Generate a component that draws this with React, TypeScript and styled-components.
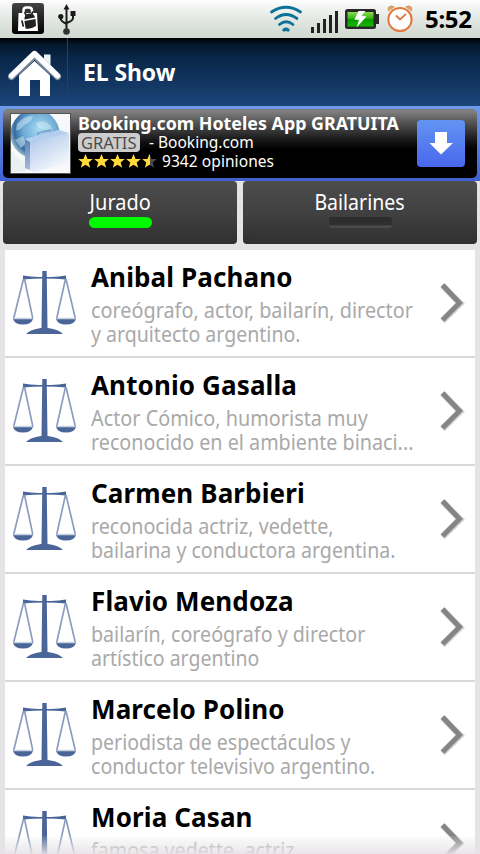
import React from "react";
import styled, { createGlobalStyle } from "styled-components";

const Global = createGlobalStyle`
  *{box-sizing:border-box}
  body{margin:0;background:#e6e3e6;overflow:hidden;font-family:"Noto Sans","Open Sans",sans-serif}
`;
const Screen = styled.div`
  position:relative;width:480px;height:854px;overflow:hidden;background:#e6e3e6;display:flex;flex-direction:column;
`;
const Line = styled.span<{ $sx?: number; $center?: boolean }>`
  display:block;white-space:pre;
  transform:scaleX(${p => p.$sx ?? 1});transform-origin:${p => (p.$center ? "center" : "left")};
`;
const StatusBar = styled.header`
  flex:none;height:38px;padding:0 9px 0 12px;display:flex;justify-content:space-between;align-items:center;
  background:linear-gradient(#fff 0,#f4f6f4 15%,#dfe4df 60%,#cfd8d1 100%);
`;
const StatusIcons = styled.div<{ $gap: number }>`display:flex;align-items:center;height:38px;gap:${p => p.$gap}px;`;
const Clock = styled.span`
  width:46px;font-size:24px;line-height:38px;font-weight:700;color:#000;white-space:nowrap;letter-spacing:-0.3px;
`;
const TitleBar = styled.div`
  flex:none;height:68px;display:flex;align-items:center;
  background:linear-gradient(#000 0,#04182f 10%,#092748 30%,#1b457a 100%);
`;
const HomeCell = styled.div`width:68px;height:68px;border-right:1px solid #0a5c1c;padding:10px 0 0 8px;`;
const Title = styled.h1`margin:0 0 0 15px;font-size:23px;line-height:68px;font-weight:700;color:#fff;letter-spacing:-0.1px;`;
const Ad = styled.section`
  flex:none;height:75px;padding:3px;background:linear-gradient(#6f9bea,#4160d2);
`;
const AdInner = styled.div`
  height:69px;border-radius:5px;border-top:1px solid #777;display:flex;padding:3px 10px 0 7px;
  background:linear-gradient(#858585 0,#555 18%,#151515 45%,#000 58%);
`;
const AdThumb = styled.div`width:61px;height:61px;border:1.5px solid #555;background:#f6f8f9;overflow:hidden;`;
const AdText = styled.div`flex:1;margin-left:7px;margin-top:1px;color:#fff;`;
const AdTitle = styled.div`font-size:18px;line-height:19px;height:19px;font-weight:700;`;
const AdRow = styled.div`display:flex;align-items:center;height:19px;font-size:15.5px;line-height:19px;`;
const FreeTag = styled.span`
  width:62px;height:19px;padding-left:3px;margin-right:9px;border-radius:4px;background:#ccc;color:#4c4c4c;font-size:16.5px;
`;
const Opinions = styled.div`margin-left:3px;letter-spacing:0.07px;`;
const Download = styled.button`
  flex:none;width:48px;height:47px;margin:7px 2px 0 0;padding:0;border:0;border-radius:4px;background:linear-gradient(#6394f3,#4967ec);
`;
const Tabs = styled.nav`
  flex:none;height:63px;display:grid;grid-template-columns:234px 234px;gap:6px;padding:0 3px;
`;
const Tab = styled.div`
  height:63px;border-radius:4px;background:linear-gradient(#4d4d4d,#3f3f3f 55%,#303030);
  display:flex;flex-direction:column;align-items:center;color:#fff;font-size:21px;line-height:28px;padding-top:7px;
`;
const Indicator = styled.i<{ $on?: boolean }>`
  width:63px;height:11px;margin-top:1px;border-radius:${p => (p.$on ? 5.5 : 3)}px;
  background:${p => (p.$on ? "#00fb00" : "linear-gradient(#2b2b2b 0,#303030 70%,#4e4e4e 85%,#484848 100%)")};
`;
const List = styled.ul`
  list-style:none;margin:6px 5px 0;padding:0;flex:1;min-height:0;overflow:hidden;
`;
const Row = styled.li`
  height:108px;border-bottom:2px solid #dcd9dc;background:#fff;display:flex;
`;
const RowIcon = styled.div`width:64px;margin:20px 0 0 7px;flex:none;`;
const RowText = styled.div`width:348px;margin-left:15px;padding-top:9px;`;
const Name = styled.div`font-size:26px;line-height:36px;font-weight:700;color:#000;letter-spacing:0.12px;`;
const Desc = styled.div`margin-top:3px;font-size:21px;line-height:24px;color:#a9a9a9;`;
const Arrow = styled.div`margin-top:32px;`;
const Fade = styled.div`
  position:absolute;left:0;right:0;bottom:0;height:18px;background:linear-gradient(rgba(230,227,230,0.1),rgba(230,227,230,0.9));
`;

const MarketIcon = () => (
  <svg width="32" height="32" viewBox="0 0 32 32">
    <defs><linearGradient id="mk" x2="0" y2="1"><stop stopColor="#444" /><stop offset=".5" stopColor="#222" /><stop offset="1" stopColor="#000" /></linearGradient></defs>
    <rect width="32" height="31" rx="3" fill="url(#mk)" />
    <path d="M11.500 11V7.500q0-3 3-3h2.500q3 0 3 3V11" fill="none" stroke="#fff" strokeWidth="2.400" />
    <path d="M6.500 10h18.500l1 18H6z" fill="#fff" />
    <path d="M12.500 16.500q-.5-5 4.500-6 5-.5 6 4z" fill="#222" />
    <path d="M12.500 18l11-2 .5 7q-5 3.500-10.500 2.500z" fill="#222" />
    <path d="M10 18l1.200 5M13 10l1.500 3M20.500 9l-1 3" stroke="#222" strokeWidth="1.700" strokeLinecap="round" />
  </svg>
);
const UsbIcon = () => (
  <svg width="20" height="32" viewBox="0 0 20 32">
    <g fill="none" stroke="#1c1c1c" strokeWidth="2"><path d="M8.500 5v23M2.800 13v3q0 2 5.700 5M15 10v5q0 3-6.500 5" /></g>
    <path d="M8.500 1l3 5.500h-6z" fill="#1c1c1c" /><circle cx="2.800" cy="13.500" r="2.600" fill="#1c1c1c" /><path d="M12.500 8h5v5h-5z" fill="#1c1c1c" /><circle cx="8.500" cy="28.500" r="3.300" fill="#333" />
  </svg>
);
const StatusRight = () => (
  <svg width="146" height="38" viewBox="268 0 146 38">
    <defs><linearGradient id="bt" x2="0" y2="1"><stop stopColor="#8ddc54" /><stop offset=".45" stopColor="#35b40e" /><stop offset=".5" stopColor="#079b00" /><stop offset="1" stopColor="#18b804" /></linearGradient></defs>
    <g fill="none" stroke="#0b7299" strokeWidth="2.800" strokeLinecap="round">
      <path d="M271.500 12q14.500-9.500 29 0M275.500 18.500q10.500-8 21.500 0M279.500 24.500q6.500-5.500 13.500 0" /><path d="M284 30q2-1.500 4 0" strokeWidth="3.400" />
    </g>
    <g fill="#222"><path d="M311 27h3v6h-3zM317 23h3v10h-3zM323 19h3v14h-3zM329 15h3v18h-3zM335 11h3v22h-3z" /></g>
    <rect x="345" y="9" width="31" height="20" rx="2.500" fill="#282828" /><path d="M376 14h3v10h-3z" fill="#282828" /><rect x="347.500" y="12" width="26" height="14.500" fill="url(#bt)" />
    <path d="M358.500 11l-4 8.500 4.500.5-2.500 7.500 10-11-5-1 4-4.500z" fill="#fff" />
    <path d="M388 11.500q-1.500-5.500 3.500-6 2 0 3.500 1.500zM412 11.500q1.500-5.500-3.500-6-2 0-3.500 1.500z" fill="#dba06a" />
    <circle cx="400" cy="19.500" r="11.600" fill="#fff" stroke="#e2783e" strokeWidth="2" /><path d="M396 15.500l4 4 6-5.500" fill="none" stroke="#d97848" strokeWidth="1.800" />
  </svg>
);
const HomeIcon = () => (
  <svg width="54" height="50" viewBox="8 48 54 50">
    <path d="M44 60v-5.500h6.500v11z" fill="#edf2f8" />
    <path d="M11.500 76.500L34.500 54.500 57.500 76.500" fill="none" stroke="#7d8fa7" strokeWidth="7" strokeLinecap="round" strokeLinejoin="round" />
    <path d="M19 75.500L34.500 61 50 75.500V96H40V80H30v16H19z" fill="#fff" />
    <path d="M11.500 75.800L34.500 53.500 57.500 75.800" fill="none" stroke="#fff" strokeWidth="5.400" strokeLinecap="round" strokeLinejoin="round" />
    <path d="M19 74.500L34.500 59.500 50 74.500" fill="none" stroke="#8494a8" strokeWidth="1" />
  </svg>
);
const ThumbArt = () => (
  <svg width="58" height="58" viewBox="0 0 58 58">
    <defs>
      <radialGradient id="gl" cx=".6" cy=".4" r=".62"><stop stopColor="#a9dcf3" /><stop offset=".55" stopColor="#6fabd6" /><stop offset=".85" stopColor="#356c9f" /><stop offset="1" stopColor="#8fb0c8" /></radialGradient>
      <linearGradient id="cs" x2=".6" y2="1"><stop stopColor="#8fafdc" /><stop offset=".35" stopColor="#bdd1ee" /><stop offset="1" stopColor="#f3f7fc" /></linearGradient>
      <linearGradient id="sd" x2="0" y2="1"><stop stopColor="#5f80b2" /><stop offset="1" stopColor="#a5bddc" /></linearGradient>
    </defs>
    <circle cx="24" cy="20" r="24.500" fill="url(#gl)" />
    <path d="M6 10q8-9 16-8-1 6-9 9-4 6-8 5zM25 9q9-4 15 3l1 5-14-3zM4 26l8-4 3 7-5 5z" fill="#d3edf7" opacity=".5" />
    <path d="M0 36q6 10 15 12v10H0z" fill="#e9f0f4" />
    <path d="M14 25l34-9 10 4v29l-34 9-9-3z" fill="url(#cs)" /><path d="M14 25l5 3v28l-5-2z" fill="url(#sd)" /><path d="M14 25l34-9 10 3-39 9z" fill="#b4cef0" /><path d="M27 21v-2l12-3v2" fill="none" stroke="#7e9fc8" strokeWidth="1.600" />
  </svg>
);
const STAR = "M0-7.600L2.100-2.500H7.300L3.200.9 4.700 6.300 0 3.300-4.700 6.300-3.200.9-7.300-2.500H-2.100z";
const Stars = () => (
  <svg width="81" height="18" viewBox="0 0 81 18">
    <defs><linearGradient id="half"><stop offset=".5" stopColor="#ffda3e" /><stop offset=".5" stopColor="#4a4a4a" /></linearGradient></defs>
    {[0, 1, 2, 3, 4].map(i => <path key={i} d={STAR} transform={`translate(${7.5 + i * 16} 8.500)`} fill={i === 4 ? "url(#half)" : "#ffda3e"} />)}
  </svg>
);
const Scales = () => (
  <svg width="64" height="66" viewBox="12 270 64 66">
    <g fill="#4a6699">
      <path d="M42.300 271h4.400l.8 57h-6zM26 334q4-4.500 15-6h7q11 1.500 15 6z" />
      <path d="M23 275.500q10 2 21.500 1.300 12 .7 21.500-1.300v4q-10-1-21.500-1-12 0-21.500 1z" />
      <path d="M13 318.500h20q-1 6-10 6t-10-6zM56 318.500h20q-1 6-10 6t-10-6z" />
    </g>
    <path d="M23.500 279l-9.500 38v2M24.500 279l8 38v2M65.500 279l-8.500 38v2M66 279l9 38v2" fill="none" stroke="#8c9dbd" strokeWidth="1.700" />
    <path d="M14 318.500h18M57 318.500h18" stroke="#c7d2e2" strokeWidth="1.500" />
  </svg>
);
const Chevron = () => (
  <svg width="26" height="42" viewBox="440 282 26 42">
    <path d="M443.500 285.500L461.300 303.500 443.500 321" fill="none" stroke="#d4d4d4" strokeWidth="6.400" />
    <path d="M443.500 285L460.500 303 443.500 320" fill="none" stroke="#858585" strokeWidth="5" />
  </svg>
);

type Item = { name: string; lines: { text: string; sx: number }[] };
const items: Item[] = [
  { name: "Anibal Pachano", lines: [{ text: "coreógrafo, actor, bailarín, director", sx: 0.944 }, { text: "y arquitecto argentino.", sx: 0.931 }] },
  { name: "Antonio Gasalla", lines: [{ text: "Actor Cómico, humorista muy", sx: 0.944 }, { text: "reconocido en el ambiente binaci...", sx: 0.94 }] },
  { name: "Carmen Barbieri", lines: [{ text: "reconocida actriz, vedette,", sx: 0.938 }, { text: "bailarina y conductora argentina.", sx: 0.932 }] },
  { name: "Flavio Mendoza", lines: [{ text: "bailarín, coreógrafo y director", sx: 0.936 }, { text: "artístico argentino", sx: 0.928 }] },
  { name: "Marcelo Polino", lines: [{ text: "periodista de espectáculos y", sx: 0.932 }, { text: "conductor televisivo argentino.", sx: 0.932 }] },
  { name: "Moria Casan", lines: [{ text: "famosa vedette, actriz,", sx: 0.936 }] },
];

export default function App() {
  return (
    <Screen>
      <Global />
      <StatusBar>
        <StatusIcons $gap={14}><MarketIcon /><UsbIcon /></StatusIcons>
        <StatusIcons $gap={11}><StatusRight /><Clock>5:52</Clock></StatusIcons>
      </StatusBar>
      <TitleBar><HomeCell><HomeIcon /></HomeCell><Title>EL Show</Title></TitleBar>
      <Ad>
        <AdInner>
          <AdThumb><ThumbArt /></AdThumb>
          <AdText>
            <AdTitle><Line $sx={0.991}>Booking.com Hoteles App GRATUITA</Line></AdTitle>
            <AdRow><FreeTag>GRATIS</FreeTag><Line>- Booking.com</Line></AdRow>
            <AdRow><Stars /><Opinions><Line>9342 opiniones</Line></Opinions></AdRow>
          </AdText>
          <Download aria-label="Descargar"><svg width="48" height="47" viewBox="0 0 48 47"><path d="M18 12h12v11h6L24 34.500 12.500 23H18z" fill="#fff" /></svg></Download>
        </AdInner>
      </Ad>
      <Tabs>
        <Tab><Line $sx={0.95} $center>Jurado</Line><Indicator $on /></Tab>
        <Tab><Line $sx={0.93} $center>Bailarines</Line><Indicator /></Tab>
      </Tabs>
      <List>
        {items.map(it => (
          <Row key={it.name}>
            <RowIcon><Scales /></RowIcon>
            <RowText>
              <Name><Line>{it.name}</Line></Name>
              <Desc>{it.lines.map(l => <Line key={l.text} $sx={l.sx}>{l.text}</Line>)}</Desc>
            </RowText>
            <Arrow><Chevron /></Arrow>
          </Row>
        ))}
      </List>
      <Fade />
    </Screen>
  );
}
